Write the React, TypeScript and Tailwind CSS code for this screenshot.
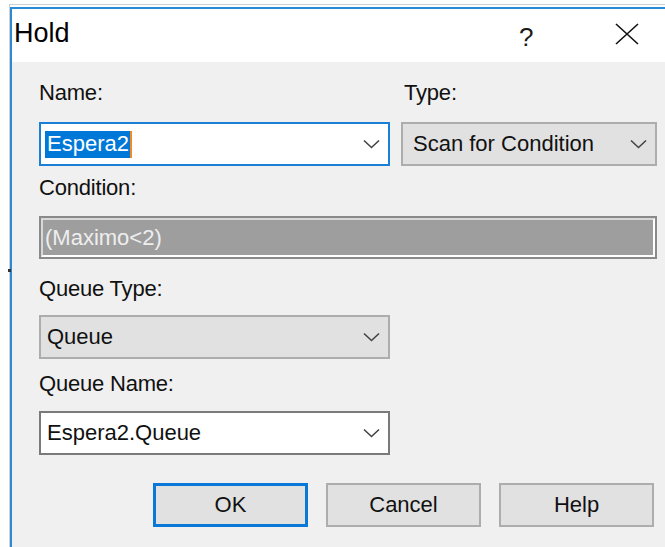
import React from "react";

function Chevron() {
  return (
    <svg width="17" height="10" viewBox="0 0 17 10" className="shrink-0">
      <path d="M1 1.5 L8.5 8.5 L16 1.5" fill="none" stroke="#444" strokeWidth="1.6" />
    </svg>
  );
}

function Label({ children }: { children: React.ReactNode }) {
  return <div className="text-[22px] leading-[24px] text-[#111] tracking-[-0.2px]">{children}</div>;
}

function Combo({
  children,
  tone = "white",
  focused = false,
}: {
  children: React.ReactNode;
  tone?: "white" | "gray";
  focused?: boolean;
}) {
  const base =
    tone === "gray"
      ? "bg-[#e1e1e1] border-[#adadad]"
      : focused
        ? "bg-white border-[#1a7fd6]"
        : "bg-white border-[#7a7a7a]";
  return (
    <div className={`h-[44px] border-2 ${base} flex items-center justify-between pl-[4px] pr-[8px]`}>
      <div className="text-[22px] leading-[24px] text-[#111] flex items-center">{children}</div>
      <Chevron />
    </div>
  );
}

function Button({ label, primary = false }: { label: string; primary?: boolean }) {
  return (
    <div
      className={`w-[155px] h-[44px] flex items-center justify-center bg-[#e1e1e1] text-[22px] leading-[24px] text-[#111] ${
        primary ? "border-[3px] border-[#0a78d7]" : "border-2 border-[#adadad]"
      }`}
    >
      {label}
    </div>
  );
}

export default function App() {
  return (
    <div className="w-[665px] h-[547px] bg-white overflow-hidden relative font-['Liberation_Sans',Arial,sans-serif]">
      {/* stray pixel on the desktop edge */}
      <div className="absolute left-[8px] top-[269px] w-[3px] h-[3px] bg-[#333]" />

      {/* window shadow + accent border */}
      <div className="mt-[4px] ml-[9px] h-[543px] border-t border-l border-[#cfcfcf] pt-[2px] bg-white">
        <div className="h-full border-t-2 border-l-2 border-[#2a8ad6] flex flex-col">
          {/* title bar */}
          <div className="h-[53px] bg-white flex items-start pt-[9px] pl-[2px] relative">
            <span className="text-[27px] leading-[30px] text-black">Hold</span>
            <span className="absolute left-[507px] top-[13px] text-[26px] leading-[30px] text-[#1a1a1a]">
              ?
            </span>
            <svg className="absolute left-[603px] top-[14px]" width="24" height="22" viewBox="0 0 24 22">
              <path d="M1 1 L23 21 M23 1 L1 21" stroke="#111" strokeWidth="1.6" fill="none" />
            </svg>
          </div>

          {/* dialog body */}
          <div className="flex-1 bg-[#f0f0f0] pl-[27px] pt-[19px]">
            <div className="grid grid-cols-[351px_256px] gap-x-[11px] w-[618px]">
              <Label>Name:</Label>
              <Label>
                <span className="pl-[3px]">Type:</span>
              </Label>
              <div className="mt-[17px]">
                <Combo focused>
                  <span className="relative pl-[2px] pr-[1px] h-[27px] flex items-center bg-[#0078d7] text-white">
                    Espera2
                    <span className="absolute right-[-2px] top-0 w-[2px] h-[27px] bg-[#f08a24]" />
                  </span>
                </Combo>
              </div>
              <div className="mt-[17px]">
                <Combo tone="gray">
                  <span className="pl-[6px]">Scan for Condition</span>
                </Combo>
              </div>
            </div>

            <div className="mt-[10px]">
              <Label>Condition:</Label>
            </div>
            <div className="mt-[16px] w-[618px] h-[43px] border-2 border-[#8a8a8a]">
              <div className="h-full border-2 border-t-[#d8d8d8] border-l-[#d8d8d8] border-r-white border-b-white bg-[#9e9e9e] flex items-center pl-[2px]">
                <span className="text-[22px] leading-[24px] text-[#eeeeee]">(Maximo&lt;2)</span>
              </div>
            </div>

            <div className="mt-[18px]">
              <Label>Queue Type:</Label>
            </div>
            <div className="mt-[14px] w-[351px]">
              <Combo tone="gray">
                <span className="pl-[2px]">Queue</span>
              </Combo>
            </div>

            <div className="mt-[13px]">
              <Label>Queue Name:</Label>
            </div>
            <div className="mt-[15px] w-[351px]">
              <Combo>
                <span className="pl-[2px]">Espera2.Queue</span>
              </Combo>
            </div>

            <div className="mt-[28px] ml-[114px] flex gap-[18px]">
              <Button label="OK" primary />
              <Button label="Cancel" />
              <Button label="Help" />
            </div>
          </div>
        </div>
      </div>
    </div>
  );
}
